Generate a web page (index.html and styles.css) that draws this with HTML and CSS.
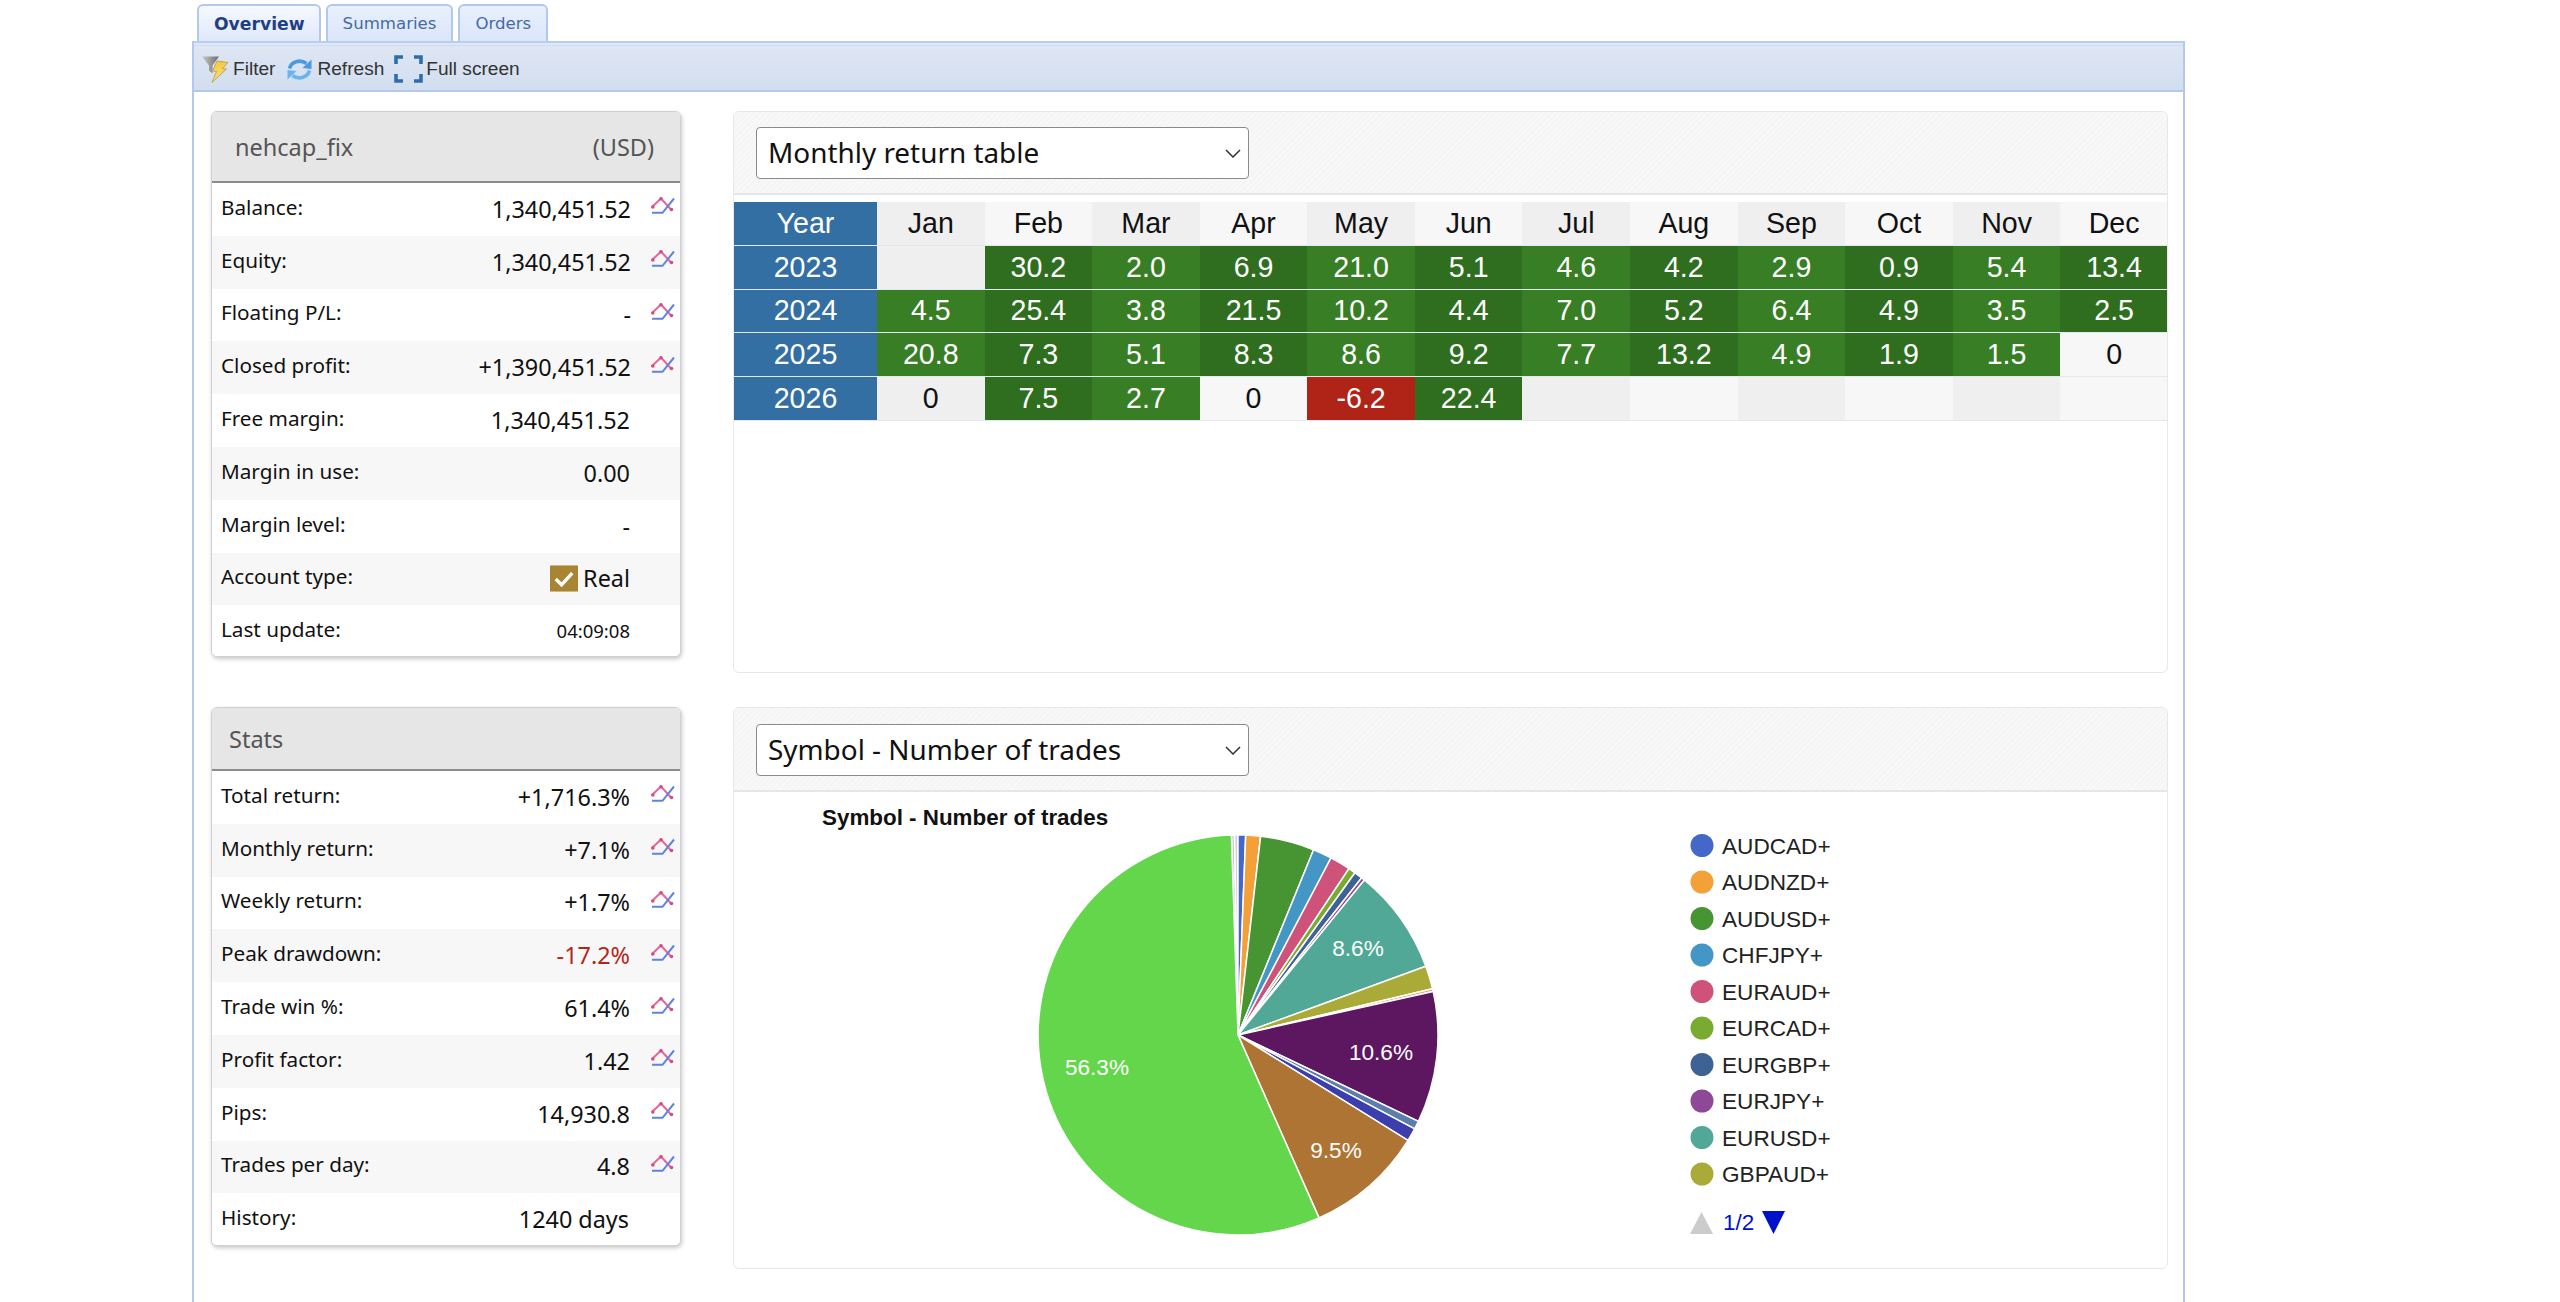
FILE: index.html
```html
<!DOCTYPE html>
<html lang="en">
<head>
<meta charset="utf-8">
<title>Overview</title>
<link rel="stylesheet" href="styles.css">
</head>
<body>
<svg class="defs" width="0" height="0" aria-hidden="true">
  <symbol id="trend" viewBox="0 0 24 17">
    <path d="M1 10 10 1.500l10 11" fill="none" stroke="#e4689a" stroke-width="2"/>
    <circle cx="1.800" cy="10" r="1.800" fill="#d84a85"/><circle cx="10" cy="1.800" r="1.800" fill="#d84a85"/><circle cx="20.500" cy="12.500" r="1.800" fill="#d84a85"/>
    <path d="M1 15.800h10.500L23 1.500" fill="none" stroke="#5f84e0" stroke-width="2"/>
  </symbol>
</svg>
<div class="app">
  <nav class="tabs">
    <a class="tab active">Overview</a>
    <a class="tab">Summaries</a>
    <a class="tab">Orders</a>
  </nav>
  <div class="strip"></div>
  <div class="toolbar">
    <span class="tool tool-filter">
      <svg class="ico-filter" viewBox="0 0 28 28">
        <defs><linearGradient id="bolt" x1="0" y1="0" x2="0" y2="1"><stop offset="0" stop-color="#f6c93a"/><stop offset="1" stop-color="#f3e28c"/></linearGradient>
        <linearGradient id="fun" x1="0" y1="0" x2="1" y2="0"><stop offset="0" stop-color="#c9c9c9"/><stop offset="1" stop-color="#6b6b6b"/></linearGradient></defs>
        <path d="M1 1.500h17l-6.500 9v8l-3.500-3v-5z" fill="url(#fun)"/>
        <path d="M16 6l11 1.500-5.500 6 4 .5L11 27.500l4.500-11-4-.5z" fill="url(#bolt)" stroke="#b08f2a" stroke-width=".7"/>
      </svg>
      Filter
    </span>
    <span class="tool tool-refresh">
      <svg class="ico-refresh" viewBox="0 0 25 25">
        <path d="M2.500 11.500C4 5 13 1.500 19.500 6.500" fill="none" stroke="#4a9ae0" stroke-width="3.600"/>
        <path d="M24.500 2.500v9.500l-9-1z" fill="#4a9ae0"/>
        <path d="M22.500 13.500C21 20 12 23.500 5.500 18.500" fill="none" stroke="#6cb4ec" stroke-width="3.600"/>
        <path d="M.5 22.500V13l9 1z" fill="#6cb4ec"/>
      </svg>
      Refresh
    </span>
    <span class="tool tool-full">
      <svg class="ico-full" viewBox="0 0 29 28">
        <path d="M9 2H2v7M20 2h7v7M9 26H2v-7M20 26h7v-7" fill="none" stroke="#2f6ea8" stroke-width="3.600"/>
      </svg>
      Full screen
    </span>
  </div>

  <main class="board">
    <section class="card card-account">
      <header class="card-head head-account"><span>nehcap_fix</span><span>(USD)</span></header>
      <div class="row"><span class="lbl">Balance:</span><span class="val">1,340,451.52</span><svg class="trend"><use href="#trend"/></svg></div>
      <div class="row"><span class="lbl">Equity:</span><span class="val">1,340,451.52</span><svg class="trend"><use href="#trend"/></svg></div>
      <div class="row"><span class="lbl">Floating P/L:</span><span class="val">-</span><svg class="trend"><use href="#trend"/></svg></div>
      <div class="row"><span class="lbl">Closed profit:</span><span class="val">+1,390,451.52</span><svg class="trend"><use href="#trend"/></svg></div>
      <div class="row"><span class="lbl">Free margin:</span><span class="val">1,340,451.52</span></div>
      <div class="row"><span class="lbl">Margin in use:</span><span class="val">0.00</span></div>
      <div class="row"><span class="lbl">Margin level:</span><span class="val">-</span></div>
      <div class="row"><span class="lbl">Account type:</span><span class="val val-real"><svg class="check" viewBox="0 0 29 27"><rect width="29" height="27" fill="#a88532"/><path d="M6 14l6 6L23 8" fill="none" stroke="#fff" stroke-width="3.500"/></svg>Real</span></div>
      <div class="row"><span class="lbl">Last update:</span><span class="val val-small">04:09:08</span></div>
    </section>

    <section class="panel panel-table">
      <header class="panel-head">
        <div class="pick"><select class="pick-box"><option>Monthly return table</option></select><svg class="chev" viewBox="0 0 16 9"><path d="M1 1l7 7 7-7" fill="none" stroke="#333" stroke-width="1.500"/></svg></div>
      </header>
      <div class="returns">
        <div class="c y">Year</div><div class="c o">Jan</div><div class="c e">Feb</div><div class="c o">Mar</div><div class="c e">Apr</div><div class="c o">May</div><div class="c e">Jun</div><div class="c o">Jul</div><div class="c e">Aug</div><div class="c o">Sep</div><div class="c e">Oct</div><div class="c o">Nov</div><div class="c e">Dec</div>
        <div class="c y">2023</div><div class="c o"></div><div class="c d">30.2</div><div class="c l">2.0</div><div class="c d">6.9</div><div class="c l">21.0</div><div class="c d">5.1</div><div class="c l">4.6</div><div class="c d">4.2</div><div class="c l">2.9</div><div class="c d">0.9</div><div class="c l">5.4</div><div class="c d">13.4</div>
        <div class="c y">2024</div><div class="c l">4.5</div><div class="c d">25.4</div><div class="c l">3.8</div><div class="c d">21.5</div><div class="c l">10.2</div><div class="c d">4.4</div><div class="c l">7.0</div><div class="c d">5.2</div><div class="c l">6.4</div><div class="c d">4.9</div><div class="c l">3.5</div><div class="c d">2.5</div>
        <div class="c y">2025</div><div class="c l">20.8</div><div class="c d">7.3</div><div class="c l">5.1</div><div class="c d">8.3</div><div class="c l">8.6</div><div class="c d">9.2</div><div class="c l">7.7</div><div class="c d">13.2</div><div class="c l">4.9</div><div class="c d">1.9</div><div class="c l">1.5</div><div class="c e">0</div>
        <div class="c y">2026</div><div class="c o">0</div><div class="c d">7.5</div><div class="c l">2.7</div><div class="c e">0</div><div class="c r">-6.2</div><div class="c d">22.4</div><div class="c o"></div><div class="c e"></div><div class="c o"></div><div class="c e"></div><div class="c o"></div><div class="c e"></div>
      </div>
    </section>

    <section class="card card-stats">
      <header class="card-head head-stats"><span>Stats</span></header>
      <div class="row"><span class="lbl">Total return:</span><span class="val">+1,716.3%</span><svg class="trend"><use href="#trend"/></svg></div>
      <div class="row"><span class="lbl">Monthly return:</span><span class="val">+7.1%</span><svg class="trend"><use href="#trend"/></svg></div>
      <div class="row"><span class="lbl">Weekly return:</span><span class="val">+1.7%</span><svg class="trend"><use href="#trend"/></svg></div>
      <div class="row"><span class="lbl">Peak drawdown:</span><span class="val val-neg">-17.2%</span><svg class="trend"><use href="#trend"/></svg></div>
      <div class="row"><span class="lbl">Trade win %:</span><span class="val">61.4%</span><svg class="trend"><use href="#trend"/></svg></div>
      <div class="row"><span class="lbl">Profit factor:</span><span class="val">1.42</span><svg class="trend"><use href="#trend"/></svg></div>
      <div class="row"><span class="lbl">Pips:</span><span class="val">14,930.8</span><svg class="trend"><use href="#trend"/></svg></div>
      <div class="row"><span class="lbl">Trades per day:</span><span class="val">4.8</span><svg class="trend"><use href="#trend"/></svg></div>
      <div class="row"><span class="lbl">History:</span><span class="val">1240 days</span></div>
    </section>

    <section class="panel panel-chart">
      <header class="panel-head">
        <div class="pick"><select class="pick-box"><option>Symbol - Number of trades</option></select><svg class="chev" viewBox="0 0 16 9"><path d="M1 1l7 7 7-7" fill="none" stroke="#333" stroke-width="1.500"/></svg></div>
      </header>
      <svg class="chart" viewBox="0 0 1433 476" width="1433" height="476">
        <text class="chart-title" x="88" y="32.500">Symbol - Number of trades</text>
        <g transform="translate(504 243)" stroke="#fff" stroke-width="1.500">
          <path fill="#c9c9c9" d="M0 0L-6.600-199.900A200 200 0 0 1-3.500-200Z"/>
          <path fill="#d4d4d4" d="M0 0L-3.500-200A200 200 0 0 1 0-200Z"/>
          <path fill="#4467c9" d="M0 0L0-200A200 200 0 0 1 7.700-199.900Z"/>
          <path fill="#f3a038" d="M0 0L7.700-199.900A200 200 0 0 1 22.600-198.700Z"/>
          <path fill="#479532" d="M0 0L22.600-198.700A200 200 0 0 1 75.600-185.200Z"/>
          <path fill="#4496c5" d="M0 0L75.600-185.200A200 200 0 0 1 93-177.100Z"/>
          <path fill="#cf527b" d="M0 0L93-177.100A200 200 0 0 1 111-166.400Z"/>
          <path fill="#78ab30" d="M0 0L111-166.400A200 200 0 0 1 117-162.200Z"/>
          <path fill="#3f6294" d="M0 0L117-162.200A200 200 0 0 1 123.700-157.200Z"/>
          <path fill="#8e4896" d="M0 0L123.700-157.200A200 200 0 0 1 126.400-155Z"/>
          <path fill="#52a897" d="M0 0L126.400-155A200 200 0 0 1 187.800-68.700Z"/>
          <path fill="#aaaa38" d="M0 0L187.800-68.700A200 200 0 0 1 194.600-46.300Z"/>
          <path fill="#e8a070" d="M0 0L194.600-46.300A200 200 0 0 1 195.200-43.600Z"/>
          <path fill="#5c1760" d="M0 0L195.200-43.600A200 200 0 0 1 180.400 86.400Z"/>
          <path fill="#5a7fae" d="M0 0L180.400 86.400A200 200 0 0 1 176.600 93.900Z"/>
          <path fill="#3b3eac" d="M0 0L176.600 93.900A200 200 0 0 1 170 105.400Z"/>
          <path fill="#ae7434" d="M0 0L170 105.400A200 200 0 0 1 81 182.900Z"/>
          <path fill="#63d64b" d="M0 0L81 182.900A200 200 0 1 1-6.600-199.900Z"/>
        </g>
        <g class="slice-labels">
          <text x="363" y="282.500">56.3%</text>
          <text x="624" y="163.500">8.6%</text>
          <text x="647" y="267.500">10.6%</text>
          <text x="602" y="365.500">9.5%</text>
        </g>
        <g class="legend">
          <circle cx="968" cy="53.500" r="11.500" fill="#4467c9"/><text x="988" y="61.500">AUDCAD+</text>
          <circle cx="968" cy="90" r="11.500" fill="#f3a038"/><text x="988" y="98">AUDNZD+</text>
          <circle cx="968" cy="126.500" r="11.500" fill="#479532"/><text x="988" y="134.500">AUDUSD+</text>
          <circle cx="968" cy="163" r="11.500" fill="#4496c5"/><text x="988" y="171">CHFJPY+</text>
          <circle cx="968" cy="199.500" r="11.500" fill="#cf527b"/><text x="988" y="207.500">EURAUD+</text>
          <circle cx="968" cy="236" r="11.500" fill="#78ab30"/><text x="988" y="244">EURCAD+</text>
          <circle cx="968" cy="272.500" r="11.500" fill="#3f6294"/><text x="988" y="280.500">EURGBP+</text>
          <circle cx="968" cy="309" r="11.500" fill="#8e4896"/><text x="988" y="317">EURJPY+</text>
          <circle cx="968" cy="345.500" r="11.500" fill="#52a897"/><text x="988" y="353.500">EURUSD+</text>
          <circle cx="968" cy="382" r="11.500" fill="#aaaa38"/><text x="988" y="390">GBPAUD+</text>
        </g>
        <path d="M956 442l11.500-22 11.500 22z" fill="#ccc"/>
        <text class="pager" x="989" y="438">1/2</text>
        <path d="M1028 419h23l-11.500 23z" fill="#0011cc"/>
      </svg>
    </section>
  </main>
</div>
</body>
</html>
```

FILE: styles.css
```css
* { box-sizing: border-box; }
html, body { margin: 0; padding: 0; background: #fff; }
body { height: 1302px; overflow: hidden; font-family: "Noto Sans", sans-serif; color: #111; }
.defs { position: absolute; }

.app {
  margin-left: 191px;
  width: 1994px;
  height: 1302px;
  padding-top: 4px;
  border-left: 2px solid transparent;
  position: relative;
}
.app::after {
  content: "";
  position: absolute;
  left: -1px; right: 0; top: 41px; bottom: 0;
  border: solid #b3c9ec;
  border-width: 0 2px;
  pointer-events: none;
}

.tabs { display: flex; gap: 5px; height: 37px; margin-left: 4px; font-family: "DejaVu Sans", sans-serif; }
.tab {
  height: 37px;
  padding: 0 15px;
  display: flex; align-items: center;
  font-size: 16.600px;
  color: #456aa6;
  background: linear-gradient(#e9f0fc, #dbe6f9);
  border: 2px solid #b3c9ec;
  border-bottom: 0;
  border-radius: 6px 6px 0 0;
}
.tab.active { padding: 0 14px 0 15px; font-weight: 700; color: #1f3f85; background: linear-gradient(#f6f9fe, #dfe8fa); font-size: 17.200px; }

.strip { height: 5px; background: #dfe8fa; border-top: 2px solid #b9cdef; border-bottom: 1px solid #cfdbf0; margin-left: -1px; }
.toolbar {
  height: 46px;
  margin-left: -1px;
  padding: 2px 0 0 9px;
  display: flex; align-items: center;
  font-family: "Liberation Sans", sans-serif;
  font-size: 19.100px;
  color: #333;
  background: linear-gradient(#dfe6f4, #d1deef);
  border-bottom: 2px solid #b3c9ec;
}
.tool { display: flex; align-items: center; }
.ico-filter { width: 28px; height: 28px; margin-right: 4px; }
.ico-refresh { width: 25px; height: 25px; margin-right: 5px; }
.ico-full { width: 29px; height: 28px; margin-right: 3px; }
.tool-refresh { margin-left: 12px; }
.tool-full { margin-left: 10px; }

.board {
  display: grid;
  grid-template-columns: 470px 1435px;
  column-gap: 52px;
  align-items: start;
  padding: 19px 0 0 18px;
}
.card-account { height: 546px; }
.card-stats { height: 539px; }
.panel-table { height: 562px; margin-bottom: 34px; }
.panel-chart { height: 562px; }

.card {
  background: #fff;
  border: 1px solid #d0d0d0;
  border-radius: 6px;
  box-shadow: 1px 2px 4px rgba(0,0,0,.22);
  overflow: hidden;
}
.card-head {
  background: #e6e6e6;
  border-bottom: 2px solid #8c8c8c;
  color: #555;
  font-size: 23.500px;
  display: flex; justify-content: space-between; align-items: center;
}
.head-account { height: 71px; padding: 0 26px 0 23px; }
.head-stats { height: 63px; padding: 0 17px; }
.row {
  height: 52.800px;
  display: flex; align-items: center;
  padding-left: 9px;
}
.card .row:nth-child(odd) { background: #f7f7f7; }
.card .row:nth-child(even) { background: #fff; }
.lbl { font-size: 20.700px; margin-bottom: 5px; flex: 1; }
.val { font-size: 23.400px; margin-top: -1px; width: 190px; text-align: right; margin-right: 50px; }
.card-stats .val { margin-right: 51px; }
.trend { width: 24px; height: 17px; margin-left: -30px; margin-right: 5px; margin-top: -7px; flex: none; }
.val-neg { color: #b3261a; }
.val-small { font-size: 18.500px; margin-top: -2px; }
.val-real { display: flex; justify-content: flex-end; align-items: center; }
.check { width: 28px; height: 27px; margin-right: 5px; }

.panel { border: 1px solid #e8e8e8; border-radius: 6px; background: #fff; overflow: hidden; }
.panel-head {
  height: 83px;
  padding: 15px 22px;
  border-bottom: 2px solid #e6e6e6;
  background: repeating-linear-gradient(135deg, #f8f8f8 0 2px, #f5f5f5 2px 4px);
}
.panel-chart .panel-head { height: 84px; padding-top: 16px; }
.pick { position: relative; width: 493px; height: 52px; }
.pick-box {
  appearance: none;
  width: 100%; height: 100%;
  padding: 0 40px 3px 11px;
  font-family: "Noto Sans", sans-serif;
  font-size: 27.900px;
  color: #111;
  background: #fff;
  border: 1px solid #8a8a8a;
  border-radius: 4px;
}
.chev { position: absolute; right: 8px; top: 22px; width: 16px; height: 9px; }

.returns {
  display: grid;
  grid-template-columns: 143px repeat(12, 107.580px);
  grid-auto-rows: 43.800px;
  margin-top: 7px;
  font-family: "Liberation Sans", sans-serif;
  font-size: 28.600px;
}
.c { display: flex; align-items: center; justify-content: center; border-bottom: 1px solid #dfeaf0; }
.y { background: #336fa3; color: #fff; }
.o { background: #efefef; color: #111; }
.e { background: #f7f7f7; color: #111; }
.l { background: #387e24; color: #fff; }
.d { background: #2e6e1e; color: #fff; }
.r { background: #b02418; color: #fff; }

.chart { display: block; }
.chart-title { font: 700 22.400px "Liberation Sans", sans-serif; fill: #111; }
.slice-labels text { font: 22.600px "Liberation Sans", sans-serif; fill: #fff; text-anchor: middle; }
.legend text { font: 22.600px "Liberation Sans", sans-serif; fill: #222; }
.pager { font: 22.400px "Liberation Sans", sans-serif; fill: #0011cc; }
```
